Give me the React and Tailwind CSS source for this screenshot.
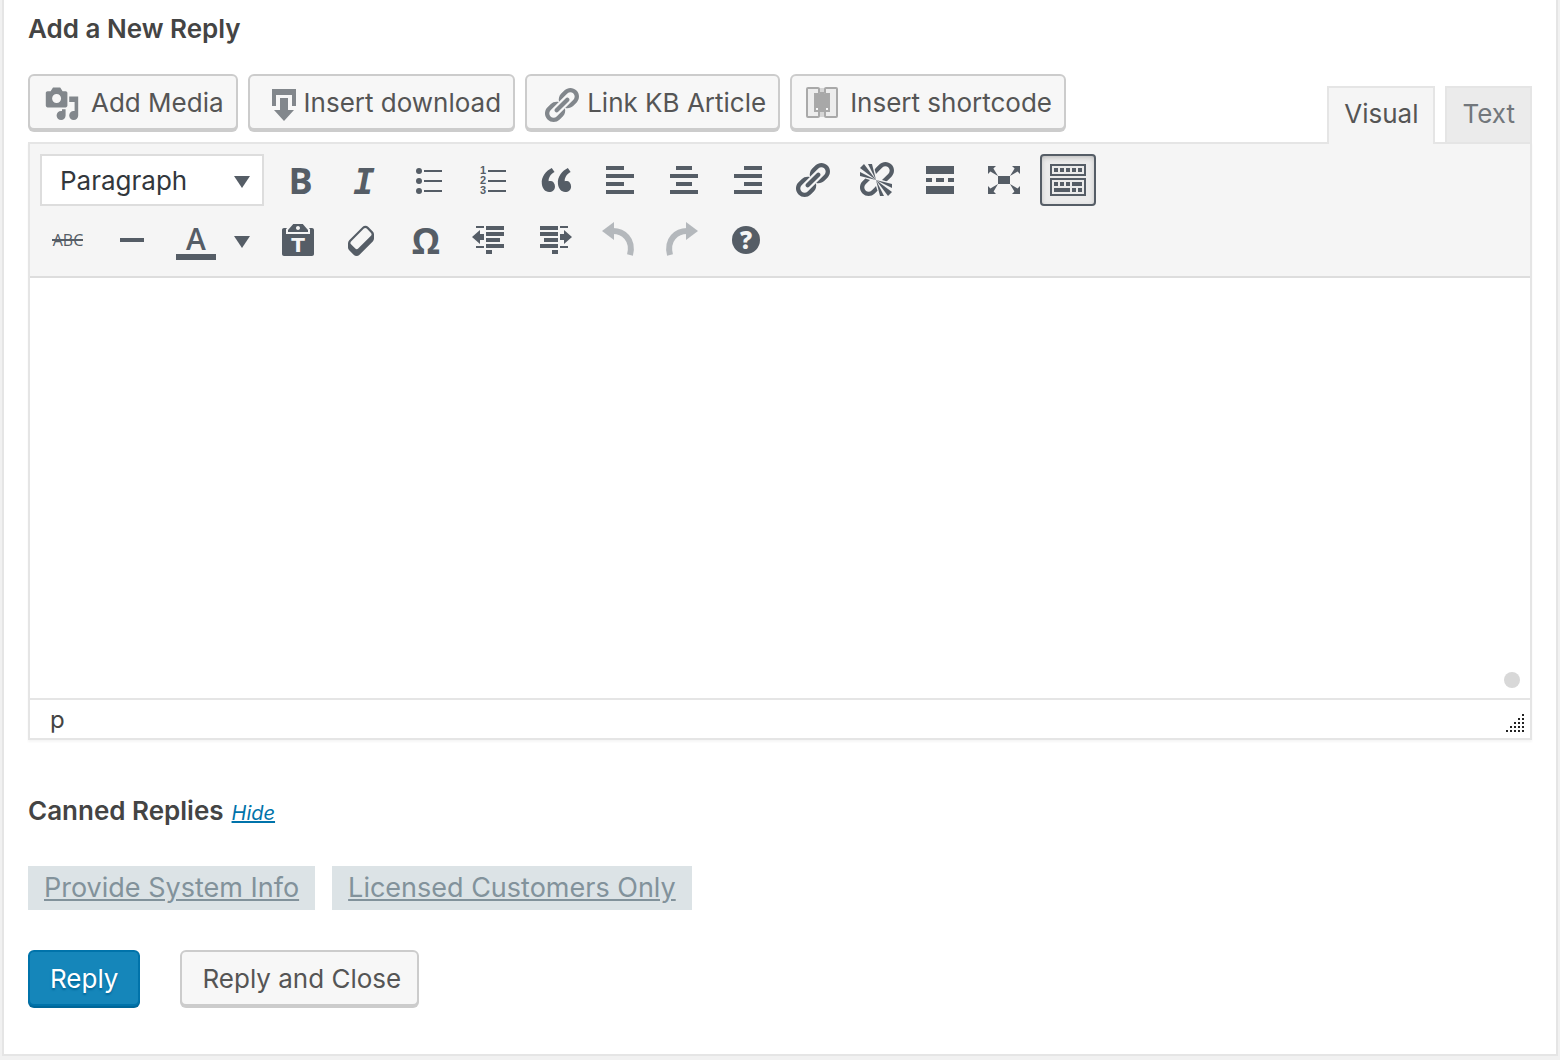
import { useState } from "react";

const LINK_PATH =
  "M17.74 2.76c1.68 1.69 1.68 4.41 0 6.1l-1.53 1.52c-1.12 1.12-2.7 1.47-4.14 1.09l2.62-2.61.76-.77.76-.76c.84-.84.84-2.2 0-3.04-.84-.85-2.2-.85-3.04 0l-.77.76-3.38 3.38c-.37-1.44-.02-3.02 1.1-4.14l1.52-1.53c1.69-1.68 4.42-1.68 6.1 0zM8.59 13.43l5.34-5.34c.42-.42.42-1.1 0-1.52-.44-.43-1.13-.39-1.53 0l-5.33 5.34c-.42.42-.42 1.1 0 1.52.44.43 1.13.39 1.52 0zm-.76 2.29l4.14-4.15c.38 1.44.03 3.02-1.09 4.14l-1.52 1.53c-1.69 1.68-4.41 1.68-6.1 0-1.68-1.68-1.68-4.42 0-6.1l1.53-1.52c1.12-1.12 2.7-1.47 4.14-1.1l-4.14 4.15c-.85.84-.85 2.2 0 3.05.84.84 2.2.84 3.04 0z";

// 20 unit icons, drawn at double size
function Glyph({ d, children }) {
  return (
    <svg viewBox="0 0 20 20" className="size-10 shrink-0 overflow-visible fill-current" aria-hidden="true">
      <path d={d} />
      {children}
    </svg>
  );
}

function Canvas({ children }) {
  return (
    <svg viewBox="0 0 40 40" className="size-10 shrink-0 overflow-visible fill-current" aria-hidden="true">
      {children}
    </svg>
  );
}

const firstRow = [
  {
    name: "Bold",
    icon: (
      <Canvas>
        <text x="20.5" y="34" fontSize="36" fontWeight="700" textAnchor="middle" className="font-['Open_Sans',sans-serif]">B</text>
      </Canvas>
    ),
  },
  {
    name: "Italic",
    icon: (
      <Canvas>
        <text x="20" y="34" fontSize="36" fontWeight="700" fontStyle="italic" textAnchor="middle" className="font-['DejaVu_Sans_Mono',monospace]">I</text>
      </Canvas>
    ),
  },
  {
    name: "Bulleted list",
    icon: (
      <Canvas>
        <circle cx="11" cy="11" r="3" />
        <circle cx="11" cy="21" r="3" />
        <circle cx="11" cy="31" r="3" />
        <path d="M16 10h18v2H16zM16 20h18v2H16zM16 30h18v2H16z" />
      </Canvas>
    ),
  },
  {
    name: "Numbered list",
    icon: (
      <Canvas>
        <g fontSize="11" fontWeight="700" textAnchor="middle" className="font-['Liberation_Sans',sans-serif]">
          <text x="11" y="14">1</text>
          <text x="11" y="24">2</text>
          <text x="11" y="34">3</text>
        </g>
        <path d="M16 10h18v2H16zM16 20h18v2H16zM16 30h18v2H16z" />
      </Canvas>
    ),
  },
  {
    name: "Blockquote",
    icon: (
      <Glyph d="M9.49 13.22c0-.74-.2-1.38-.61-1.9-.62-.78-1.83-.88-2.53-.72-.29-1.65 1.11-3.75 2.92-4.65L7.88 4c-2.73 1.3-5.42 4.28-4.96 8.05C3.21 14.43 4.59 16 6.54 16c.85 0 1.56-.25 2.12-.75s.83-1.18.83-2.03zm8.05 0c0-.74-.2-1.38-.61-1.9-.63-.78-1.83-.88-2.53-.72-.29-1.65 1.11-3.75 2.92-4.65L15.93 4c-2.73 1.3-5.41 4.28-4.95 8.05.29 2.38 1.66 3.95 3.61 3.95.85 0 1.56-.25 2.12-.75s.83-1.18.83-2.03z" />
    ),
  },
  { name: "Align left", icon: <Glyph d="M12 5V3H3v2h9zm5 4V7H3v2h14zm-5 4v-2H3v2h9zm5 4v-2H3v2h14z" /> },
  { name: "Align center", icon: <Glyph d="M14 5V3H6v2h8zm3 4V7H3v2h14zm-3 4v-2H6v2h8zm3 4v-2H3v2h14z" /> },
  { name: "Align right", icon: <Glyph d="M17 5V3H8v2h9zm0 4V7H3v2h14zm0 4v-2H8v2h9zm0 4v-2H3v2h14z" /> },
  { name: "Insert link", icon: <Glyph d={LINK_PATH} /> },
  {
    name: "Remove link",
    icon: (
      <Glyph d="M17.74 2.26c1.68 1.69 1.68 4.41 0 6.1l-1.53 1.52c-.32.33-.69.58-1.08.77L13 10l1.69-1.64.76-.77.76-.76c.84-.84.84-2.2 0-3.04-.84-.85-2.2-.85-3.04 0l-.77.76-.76.76L10 7l-.65-2.14c.19-.38.44-.75.77-1.07l1.52-1.53c1.69-1.68 4.42-1.68 6.1 0zM2 4l8 6-6-8zm4-2l4 8-2-8H6zM2 6l8 4-8-2V6zm7.36 7.69L10 13l.74 2.35-1.38 1.39c-1.69 1.68-4.41 1.68-6.1 0-1.68-1.68-1.68-4.42 0-6.1l1.39-1.38L7 10l-.69.64-1.52 1.53c-.85.84-.85 2.2 0 3.04.84.85 2.2.85 3.04 0zM18 16l-8-6 6 8zm-4 2l-4-8 2 8h2zm4-4l-8-4 8 2v2z" />
    ),
  },
  { name: "Read more", icon: <Glyph d="M17 7V3H3v4h14zM6 11V9H3v2h3zm6 0V9H8v2h4zm5 0V9h-3v2h3zm0 6v-4H3v4h14z" /> },
  {
    name: "Distraction-free writing",
    icon: (
      <Glyph d="M7 8h6v4H7zm-5 5v4h4l-1.2-1.2L7 12l-3.8 2.2M14 17h4v-4l-1.2 1.2L13 12l2.2 3.8M14 3l1.3 1.3L13 8l3.8-2.2L18 7V3M6 3H2v4l1.2-1.2L7 8 4.7 4.3" />
    ),
  },
];

const secondRow = [
  {
    name: "Paste as text",
    icon: (
      <Glyph d="M12.38 2L15 5v1H5V5l2.64-3h4.74zM10 5c.55 0 1-.44 1-1 0-.55-.45-1-1-1s-1 .45-1 1c0 .56.45 1 1 1zm5.45-1H17c.55 0 1 .45 1 1v12c0 .56-.45 1-1 1H3c-.55 0-1-.44-1-1V5c0-.55.45-1 1-1h1.55L4 4.63V7h12V4.63z">
        <text x="10" y="16" fontSize="10" fontWeight="700" textAnchor="middle" className="fill-[#f5f5f5] font-['DejaVu_Sans',sans-serif]">T</text>
      </Glyph>
    ),
  },
  {
    name: "Clear formatting",
    icon: (
      <Glyph d="M14.29 4.59l1.1 1.11c.41.4.61.94.61 1.47v2.12c0 .53-.2 1.07-.61 1.47l-6.63 6.63c-.4.41-.94.61-1.47.61s-1.07-.2-1.47-.61l-1.11-1.1-1.1-1.11c-.41-.4-.61-.94-.61-1.47v-2.12c0-.54.2-1.07.61-1.48l6.63-6.62c.4-.41.94-.61 1.47-.61s1.06.2 1.47.61zm-6.21 9.7l6.42-6.42c.39-.39.39-1.03 0-1.43L12.36 4.3c-.19-.19-.45-.29-.72-.29s-.52.1-.71.29l-6.42 6.42c-.39.4-.39 1.04 0 1.43l2.14 2.14c.38.38 1.04.38 1.43 0z" />
    ),
  },
  {
    name: "Special character",
    icon: (
      <Canvas>
        <text x="20" y="34" fontSize="36" fontWeight="700" textAnchor="middle" className="font-['Open_Sans',sans-serif]">Ω</text>
      </Canvas>
    ),
  },
  {
    name: "Decrease indent",
    icon: (
      <Canvas>
        <path d="M16 6h18v4H16zM16 12h18v4H16zM16 18h14v4H16zM16 24h18v4H16zM16 30h6v4h-6zM6 6h8v2H6zM6 26h8v2H6zM2 17l8-7v4h4v6h-4v4z" />
      </Canvas>
    ),
  },
  {
    name: "Increase indent",
    icon: (
      <Canvas>
        <path d="M6 6h18v4H6zM6 12h18v4H6zM10 18h14v4H10zM6 24h18v4H6zM18 30h6v4h-6zM26 6h8v2h-8zM26 26h8v2h-8zM38 17l-8-7v4h-4v6h4v4z" />
      </Canvas>
    ),
  },
  {
    name: "Undo",
    disabled: true,
    icon: (
      <Canvas>
        <path d="M4 11L16 2v18z" />
        <path d="M15 11C25 11 36 19 32 35" fill="none" stroke="currentColor" strokeWidth="6" />
      </Canvas>
    ),
  },
  {
    name: "Redo",
    disabled: true,
    icon: (
      <Canvas>
        <path d="M36 11L24 2v18z" />
        <path d="M25 11C15 11 4 19 8 35" fill="none" stroke="currentColor" strokeWidth="6" />
      </Canvas>
    ),
  },
  {
    name: "Keyboard shortcuts",
    icon: (
      <Canvas>
        <circle cx="20" cy="20" r="14" />
        <text x="20" y="29" fontSize="24" fontWeight="800" textAnchor="middle" className="fill-[#f5f5f5] font-['Open_Sans',sans-serif]">?</text>
      </Canvas>
    ),
  },
];

const mediaButtons = [
  {
    name: "Add Media",
    icon: (
      <svg viewBox="0 -2 20 22" className="mr-[11px] h-10 w-9 fill-[#82878c]" aria-hidden="true">
        <path d="M13 11V4c0-.55-.45-1-1-1h-1.67L9 1H5L3.67 3H2c-.55 0-1 .45-1 1v7c0 .55.45 1 1 1h10c.55 0 1-.45 1-1zM7 4.5c1.38 0 2.5 1.12 2.5 2.5S8.38 9.5 7 9.5 4.5 8.38 4.5 7 5.62 4.5 7 4.5zM14 6h5v10.5c0 1.38-1.12 2.5-2.5 2.5S14 17.88 14 16.5s1.12-2.5 2.5-2.5c.17 0 .34.02.5.05V9h-3V6zm-4 8.05V13h2v3.5c0 1.38-1.12 2.5-2.5 2.5S7 17.88 7 16.5 8.12 14 9.5 14c.17 0 .34.02.5.05z" />
      </svg>
    ),
  },
  {
    name: "Insert download",
    icon: (
      <svg viewBox="0 0 40 40" className="size-10 fill-[#82878c]" aria-hidden="true">
        <path d="M8 7h24v17h-4V13H12v11H8zM16 16h8v12h6L20 39 10 28h6z" />
      </svg>
    ),
  },
  {
    name: "Link KB Article",
    icon: (
      <svg viewBox="0 -3 20 23" className="mr-[6px] h-[46px] w-10 fill-[#82878c]" aria-hidden="true">
        <path d={LINK_PATH} />
      </svg>
    ),
  },
  {
    name: "Insert shortcode",
    icon: (
      <svg viewBox="0 -2 32 36" className="mr-3 h-9 w-8" aria-hidden="true">
        <path d="M13 2h6v29h-6z" fill="#d6d6d6" />
        <path d="M2 2h10q1 0 1 1v4q0 1-1 1H9v17h3q1 0 1 1v4q0 1-1 1H2q-1 0-1-1V3q0-1 1-1z" fill="#ededed" stroke="#a9a9a9" strokeWidth="2" />
        <path d="M30 2H20q-1 0-1 1v4q0 1 1 1h3v17h-3q-1 0-1 1v4q0 1 1 1h10q1 0 1-1V3q0-1-1-1z" fill="#ededed" stroke="#a9a9a9" strokeWidth="2" />
        <path d="M9 8h5V6h4v2h5v14h-3v4h-8v-4H9z" fill="#a8a8a8" />
      </svg>
    ),
  },
];

const cannedReplies = ["Provide System Info", "Licensed Customers Only"];

function ToolButton({ item }) {
  return (
    <button
      type="button"
      aria-label={item.name}
      disabled={item.disabled}
      className="flex h-[52px] w-14 items-center justify-center text-[#555d66] disabled:text-[#b4b8bc]"
    >
      {item.icon}
    </button>
  );
}

function Caret() {
  return (
    <svg viewBox="0 -4 16 16" className="size-4 fill-[#555d66]" aria-hidden="true">
      <path d="M0 0h16L8 12z" />
    </svg>
  );
}

function App() {
  const [tab, setTab] = useState("Visual");
  const [showReplies, setShowReplies] = useState(true);
  const [expanded, setExpanded] = useState(true);

  return (
    <div className="min-h-screen bg-[#f1f1f1] px-[2px] pb-1 font-['Inter',sans-serif] text-[26px] leading-8 text-[#444]">
      <main className="border-x-2 border-b-2 border-[#e5e5e5] bg-white px-6 pt-[13px] pb-12">
        <h2 className="mb-[29px] font-semibold">Add a New Reply</h2>

        <div className="flex items-end justify-between">
          <div className="mb-3 flex flex-wrap gap-[10px]">
            {mediaButtons.map((item) => (
              <button
                key={item.name}
                type="button"
                className="flex h-14 items-center rounded-md border-2 border-[#ccc] bg-[#f7f7f7] pr-3 pl-[14px] text-[#555] shadow-[0_2px_0_#ccc]"
              >
                {item.icon}
                <span className="pt-[2px]">{item.name}</span>
              </button>
            ))}
          </div>
          <div className="flex gap-[10px]">
            {["Visual", "Text"].map((name) => (
              <button
                key={name}
                type="button"
                onClick={() => setTab(name)}
                className={
                  tab === name
                    ? "relative z-10 -mb-[2px] h-[58px] border-2 border-b-0 border-[#e5e5e5] bg-[#f5f5f5] px-[15px] pb-1 text-[#555]"
                    : "h-14 border-2 border-b-0 border-[#e5e5e5] bg-[#ebebeb] px-[15px] pb-[2px] text-[#72777c]"
                }
              >
                {name}
              </button>
            ))}
          </div>
        </div>

        <section className="border-2 border-[#e5e5e5] shadow-[0_2px_2px_rgba(0,0,0,0.04)]">
          <div className="flex flex-col gap-2 border-b-2 border-[#ddd] bg-[#f5f5f5] p-[10px]">
            <div className="flex flex-wrap gap-2">
              <div className="relative w-56">
                <select
                  aria-label="Text style"
                  className="h-[52px] w-full appearance-none border-2 border-[#ddd] bg-white pt-[2px] pl-[18px] text-[#32373c]"
                >
                  <option>Paragraph</option>
                  <option>Heading 1</option>
                  <option>Heading 2</option>
                  <option>Preformatted</option>
                </select>
                <div className="pointer-events-none absolute inset-y-0 right-[14px] flex items-center">
                  <Caret />
                </div>
              </div>
              {firstRow.map((item) => (
                <ToolButton key={item.name} item={item} />
              ))}
              <button
                type="button"
                aria-label="Toolbar toggle"
                aria-pressed={expanded}
                onClick={() => setExpanded(!expanded)}
                className="flex h-[52px] w-14 items-center justify-center rounded border-2 border-[#555d66] bg-[#ebebeb] text-[#555d66] shadow-[inset_0_2px_6px_-2px_rgba(0,0,0,0.3)]"
              >
                <Canvas>
                  <path d="M3 5h34v10H3zM3 19h34v16H3z" fill="none" stroke="currentColor" strokeWidth="2" />
                  <path d="M6 8h4v4H6zM12 8h4v4h-4zM18 8h4v4h-4zM24 8h4v4h-4zM30 8h4v4h-4zM6 22h4v4H6zM12 22h4v4h-4zM18 22h4v4h-4zM24 22h10v4H24zM6 28h16v4H6zM24 28h4v4h-4zM30 28h4v4h-4z" />
                </Canvas>
              </button>
            </div>

            {expanded && (
              <div className="flex flex-wrap gap-2">
                <ToolButton
                  item={{
                    name: "Strikethrough",
                    icon: (
                      <Canvas>
                        <text x="20" y="26" fontSize="16" fontWeight="500" textAnchor="middle" className="font-['Open_Sans',sans-serif]">ABC</text>
                        <path d="M4 19h31v2H4z" />
                      </Canvas>
                    ),
                  }}
                />
                <ToolButton item={{ name: "Horizontal line", icon: <Canvas><path d="M8 18h24v4H8z" /></Canvas> }} />
                <div className="flex w-[94px] items-center text-[#555d66]">
                  <button type="button" aria-label="Text color" className="flex h-[52px] w-14 items-center justify-center">
                    <Canvas>
                      <text x="20" y="30" fontSize="30" fontWeight="600" textAnchor="middle" className="font-['Open_Sans',sans-serif]">A</text>
                      <path d="M0 34h40v6H0z" />
                    </Canvas>
                  </button>
                  <button type="button" aria-label="Choose text color" className="flex h-[52px] flex-1 items-center pl-[10px]">
                    <Caret />
                  </button>
                </div>
                {secondRow.map((item) => (
                  <ToolButton key={item.name} item={item} />
                ))}
              </div>
            )}
          </div>

          <div className="relative">
            <textarea aria-label="Reply" className="block h-[420px] w-full resize-none bg-white p-5 outline-none" />
            <span className="absolute right-[10px] bottom-[10px] size-4 rounded-full bg-[#d8d8d8]" />
          </div>

          <div className="flex h-10 items-center justify-between border-t-2 border-[#e5e5e5] bg-white pr-[6px] pl-5 text-[24px]">
            <span className="pt-[2px]">p</span>
            <svg viewBox="0 0 18 18" className="mt-2 size-[18px] fill-[#222]" aria-hidden="true">
              <path d="M16 0h2v2h-2zM12 4h2v2h-2zM16 4h2v2h-2zM8 8h2v2H8zM12 8h2v2h-2zM16 8h2v2h-2zM4 12h2v2H4zM8 12h2v2H8zM12 12h2v2h-2zM16 12h2v2h-2zM0 16h2v2H0zM4 16h2v2H4zM8 16h2v2H8zM12 16h2v2h-2zM16 16h2v2h-2z" />
            </svg>
          </div>
        </section>

        <div className="mt-[55px] flex items-baseline gap-2">
          <h2 className="font-semibold">Canned Replies</h2>
          <a
            href="#replies"
            onClick={() => setShowReplies(!showReplies)}
            className="text-[20px] text-[#0073aa] italic underline"
          >
            Hide
          </a>
        </div>

        {showReplies && (
          <ul id="replies" className="mt-[37px] flex flex-wrap gap-[17px] text-[27px]">
            {cannedReplies.map((reply) => (
              <li key={reply} className="bg-[#dce3e6] px-4 py-[6px]">
                <a href="#reply" className="text-[#82929b] underline">
                  {reply}
                </a>
              </li>
            ))}
          </ul>
        )}

        <div className="mt-10 flex gap-10">
          <button
            type="submit"
            className="h-14 rounded-md border-2 border-[#0073aa] bg-[#1586ba] px-5 pt-[2px] text-white shadow-[0_2px_0_#006799] text-shadow-[0_2px_2px_#006799]"
          >
            Reply
          </button>
          <button
            type="button"
            className="h-14 rounded-md border-2 border-[#ccc] bg-[#f7f7f7] pt-[2px] pr-4 pl-5 text-[#555] shadow-[0_2px_0_#ccc]"
          >
            Reply and Close
          </button>
        </div>
      </main>
    </div>
  );
}

export default App;
